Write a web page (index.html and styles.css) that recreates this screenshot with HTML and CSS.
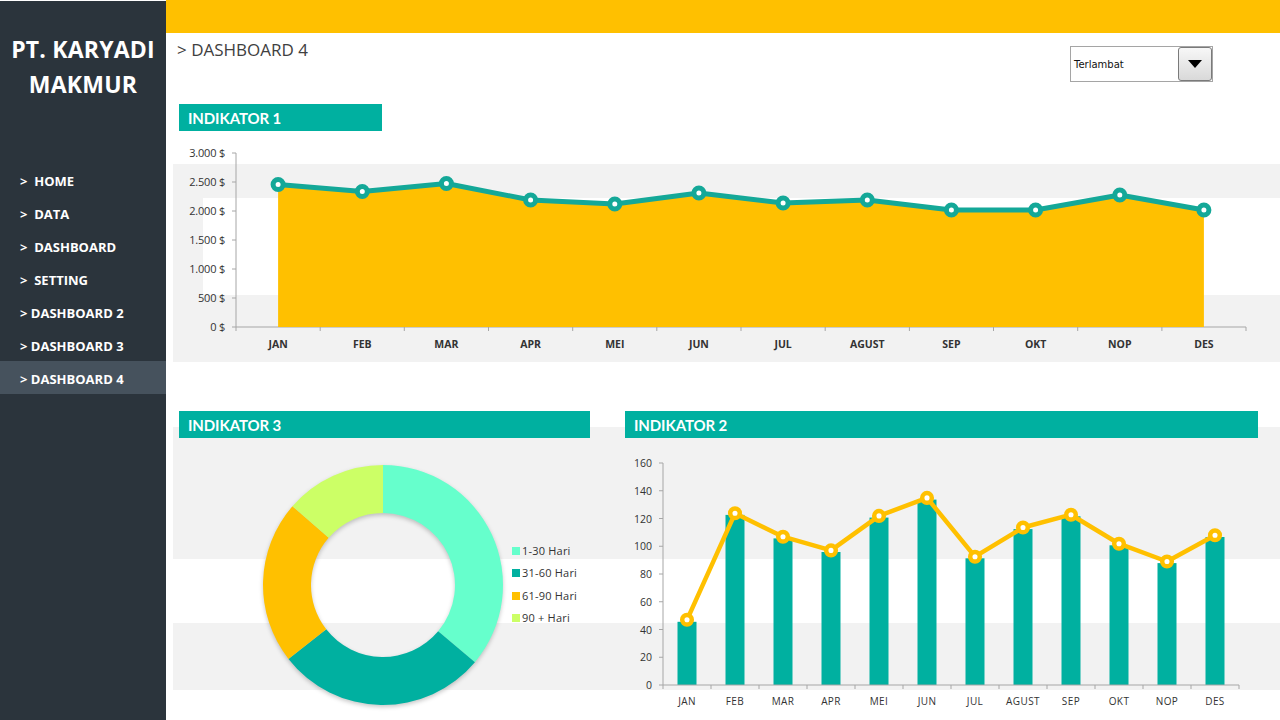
FILE: index.html
```html
<!DOCTYPE html>
<html lang="id">
<head>
<meta charset="utf-8">
<title>Dashboard 4</title>
<link rel="stylesheet" href="styles.css">
</head>
<body>
<div class="app">
  <aside class="sidebar">
    <div class="brand">PT. KARYADI<br>MAKMUR</div>
    <nav class="menu">
      <div class="item">&gt;&nbsp; HOME</div>
      <div class="item">&gt;&nbsp; DATA</div>
      <div class="item">&gt;&nbsp; DASHBOARD</div>
      <div class="item">&gt;&nbsp; SETTING</div>
      <div class="item">&gt; DASHBOARD 2</div>
      <div class="item">&gt; DASHBOARD 3</div>
      <div class="item active">&gt; DASHBOARD 4</div>
    </nav>
  </aside>
  <main class="main">
    <div class="topbar"></div>
    <div class="header">
      <div class="crumb">&gt; DASHBOARD 4</div>
      <div class="select">
        <span class="select-text">Terlambat</span>
        <span class="select-btn"><span class="tri"></span></span>
      </div>
    </div>
    <div class="title title1">INDIKATOR 1</div>
    <div class="chart1">
      <svg width="1107" height="222" viewBox="0 0 1107 222">
        <g class="axis">
          <line x1="63" y1="13" x2="63" y2="187"/>
          <line x1="59" y1="13" x2="63" y2="13"/>
          <line x1="59" y1="42" x2="63" y2="42"/>
          <line x1="59" y1="71" x2="63" y2="71"/>
          <line x1="59" y1="100" x2="63" y2="100"/>
          <line x1="59" y1="129" x2="63" y2="129"/>
          <line x1="59" y1="158" x2="63" y2="158"/>
          <line x1="59" y1="187" x2="63" y2="187"/>
          <line x1="63" y1="187" x2="1073" y2="187"/>
          <line x1="63" y1="187" x2="63" y2="191"/>
          <line x1="147.2" y1="187" x2="147.2" y2="191"/>
          <line x1="231.3" y1="187" x2="231.3" y2="191"/>
          <line x1="315.5" y1="187" x2="315.5" y2="191"/>
          <line x1="399.7" y1="187" x2="399.7" y2="191"/>
          <line x1="483.8" y1="187" x2="483.8" y2="191"/>
          <line x1="568" y1="187" x2="568" y2="191"/>
          <line x1="652.2" y1="187" x2="652.2" y2="191"/>
          <line x1="736.4" y1="187" x2="736.4" y2="191"/>
          <line x1="820.5" y1="187" x2="820.5" y2="191"/>
          <line x1="904.7" y1="187" x2="904.7" y2="191"/>
          <line x1="988.9" y1="187" x2="988.9" y2="191"/>
          <line x1="1073" y1="187" x2="1073" y2="191"/>
        </g>
        <g class="ylab">
          <text x="52" y="17">3.000 $</text>
          <text x="52" y="46">2.500 $</text>
          <text x="52" y="75">2.000 $</text>
          <text x="52" y="104">1.500 $</text>
          <text x="52" y="133">1.000 $</text>
          <text x="52" y="162">500 $</text>
          <text x="52" y="191">0 $</text>
        </g>
        <polygon class="area" points="105.1,187 105.1,44.5 189.3,51.5 273.4,43.5 357.6,60 441.8,64 525.9,53 610.1,63 694.3,60 778.4,70 862.6,70 946.8,55 1030.9,70 1030.9,187"/>
        <polyline class="line1" points="105.1,44.5 189.3,51.5 273.4,43.5 357.6,60 441.8,64 525.9,53 610.1,63 694.3,60 778.4,70 862.6,70 946.8,55 1030.9,70"/>
        <g class="dot1">
          <circle cx="105.1" cy="44.5" r="5"/>
          <circle cx="189.3" cy="51.5" r="5"/>
          <circle cx="273.4" cy="43.5" r="5"/>
          <circle cx="357.6" cy="60" r="5"/>
          <circle cx="441.8" cy="64" r="5"/>
          <circle cx="525.9" cy="53" r="5"/>
          <circle cx="610.1" cy="63" r="5"/>
          <circle cx="694.3" cy="60" r="5"/>
          <circle cx="778.4" cy="70" r="5"/>
          <circle cx="862.6" cy="70" r="5"/>
          <circle cx="946.8" cy="55" r="5"/>
          <circle cx="1030.9" cy="70" r="5"/>
        </g>
        <g class="xlab1">
          <text x="105.1" y="208">JAN</text>
          <text x="189.3" y="208">FEB</text>
          <text x="273.4" y="208">MAR</text>
          <text x="357.6" y="208">APR</text>
          <text x="441.8" y="208">MEI</text>
          <text x="525.9" y="208">JUN</text>
          <text x="610.1" y="208">JUL</text>
          <text x="694.3" y="208">AGUST</text>
          <text x="778.4" y="208">SEP</text>
          <text x="862.6" y="208">OKT</text>
          <text x="946.8" y="208">NOP</text>
          <text x="1030.9" y="208">DES</text>
        </g>
      </svg>
    </div>
    <div class="section2">
      <div class="col col-left">
        <div class="title">INDIKATOR 3</div>
        <svg width="411" height="282" viewBox="0 0 411 282">
          <g class="donut">
            <path fill="#66ffcc" d="M204 27 A120 120 0 0 1 295.92 224.13 L259.15 193.28 A72 72 0 0 0 204 75 Z"/>
            <path fill="#00b0a0" d="M295.92 224.13 A120 120 0 0 1 109.44 220.88 L147.26 191.33 A72 72 0 0 0 259.15 193.28 Z"/>
            <path fill="#ffc000" d="M109.44 220.88 A120 120 0 0 1 113.44 68.27 L149.66 99.76 A72 72 0 0 0 147.26 191.33 Z"/>
            <path fill="#ccff66" d="M113.44 68.27 A120 120 0 0 1 204 27 L204 75 A72 72 0 0 0 149.66 99.76 Z"/>
          </g>
          <g class="legend">
            <rect x="333" y="109" width="8" height="8" fill="#66ffcc"/>
            <text x="343" y="117">1-30 Hari</text>
            <rect x="333" y="131" width="8" height="8" fill="#00b0a0"/>
            <text x="343" y="139">31-60 Hari</text>
            <rect x="333" y="154" width="8" height="8" fill="#ffc000"/>
            <text x="343" y="162">61-90 Hari</text>
            <rect x="333" y="176" width="8" height="8" fill="#ccff66"/>
            <text x="343" y="184">90 + Hari</text>
          </g>
        </svg>
      </div>
      <div class="col col-right">
        <div class="title">INDIKATOR 2</div>
        <svg width="633" height="282" viewBox="0 0 633 282">
          <g class="axis">
            <line x1="38" y1="25" x2="38" y2="247"/>
            <line x1="34" y1="25" x2="38" y2="25"/>
            <line x1="34" y1="52.75" x2="38" y2="52.75"/>
            <line x1="34" y1="80.5" x2="38" y2="80.5"/>
            <line x1="34" y1="108.25" x2="38" y2="108.25"/>
            <line x1="34" y1="136" x2="38" y2="136"/>
            <line x1="34" y1="163.75" x2="38" y2="163.75"/>
            <line x1="34" y1="191.5" x2="38" y2="191.5"/>
            <line x1="34" y1="219.25" x2="38" y2="219.25"/>
            <line x1="34" y1="247" x2="38" y2="247"/>
          </g>
          <g class="ylab2">
            <text x="27" y="29">160</text>
            <text x="27" y="56.75">140</text>
            <text x="27" y="84.5">120</text>
            <text x="27" y="112.25">100</text>
            <text x="27" y="140">80</text>
            <text x="27" y="167.75">60</text>
            <text x="27" y="195.5">40</text>
            <text x="27" y="223.25">20</text>
            <text x="27" y="251">0</text>
          </g>
          <g class="bars">
            <rect x="52.5" y="183.8" width="19" height="63.2"/>
            <rect x="100.5" y="76.9" width="19" height="170.1"/>
            <rect x="148.5" y="100.4" width="19" height="146.6"/>
            <rect x="196.5" y="114" width="19" height="133"/>
            <rect x="244.5" y="79.6" width="19" height="167.4"/>
            <rect x="292.5" y="61.6" width="19" height="185.4"/>
            <rect x="340.5" y="120.3" width="19" height="126.7"/>
            <rect x="388.5" y="91.1" width="19" height="155.9"/>
            <rect x="436.5" y="78.3" width="19" height="168.7"/>
            <rect x="484.5" y="107.3" width="19" height="139.7"/>
            <rect x="532.5" y="125.1" width="19" height="121.9"/>
            <rect x="580.5" y="99" width="19" height="148"/>
          </g>
          <g class="axis">
            <line x1="38" y1="247" x2="614" y2="247"/>
            <line x1="38" y1="247" x2="38" y2="251"/>
            <line x1="86" y1="247" x2="86" y2="251"/>
            <line x1="134" y1="247" x2="134" y2="251"/>
            <line x1="182" y1="247" x2="182" y2="251"/>
            <line x1="230" y1="247" x2="230" y2="251"/>
            <line x1="278" y1="247" x2="278" y2="251"/>
            <line x1="326" y1="247" x2="326" y2="251"/>
            <line x1="374" y1="247" x2="374" y2="251"/>
            <line x1="422" y1="247" x2="422" y2="251"/>
            <line x1="470" y1="247" x2="470" y2="251"/>
            <line x1="518" y1="247" x2="518" y2="251"/>
            <line x1="566" y1="247" x2="566" y2="251"/>
            <line x1="614" y1="247" x2="614" y2="251"/>
          </g>
          <polyline class="line2" points="62,181.8 110,75.3 158,98.7 206,112.4 254,77.9 302,59.9 350,118.7 398,89.5 446,76.7 494,105.7 542,123.5 590,97.2"/>
          <g class="dot2">
            <circle cx="62" cy="181.8" r="4.8"/>
            <circle cx="110" cy="75.3" r="4.8"/>
            <circle cx="158" cy="98.7" r="4.8"/>
            <circle cx="206" cy="112.4" r="4.8"/>
            <circle cx="254" cy="77.9" r="4.8"/>
            <circle cx="302" cy="59.9" r="4.8"/>
            <circle cx="350" cy="118.7" r="4.8"/>
            <circle cx="398" cy="89.5" r="4.8"/>
            <circle cx="446" cy="76.7" r="4.8"/>
            <circle cx="494" cy="105.7" r="4.8"/>
            <circle cx="542" cy="123.5" r="4.8"/>
            <circle cx="590" cy="97.2" r="4.8"/>
          </g>
          <g class="xlab2">
            <text x="62" y="267">JAN</text>
            <text x="110" y="267">FEB</text>
            <text x="158" y="267">MAR</text>
            <text x="206" y="267">APR</text>
            <text x="254" y="267">MEI</text>
            <text x="302" y="267">JUN</text>
            <text x="350" y="267">JUL</text>
            <text x="398" y="267">AGUST</text>
            <text x="446" y="267">SEP</text>
            <text x="494" y="267">OKT</text>
            <text x="542" y="267">NOP</text>
            <text x="590" y="267">DES</text>
          </g>
        </svg>
      </div>
    </div>
  </main>
</div>
</body>
</html>
```

FILE: styles.css
```css
* { box-sizing: border-box; }

html, body {
  margin: 0;
  padding: 0;
  background: #ffffff;
}

body {
  font-family: "Open Sans", "Noto Sans", sans-serif;
  color: #333333;
}

.app {
  display: flex;
  width: 1280px;
  height: 720px;
  overflow: hidden;
}

/* ---------- sidebar ---------- */
.sidebar {
  width: 166px;
  flex: 0 0 166px;
  background: #2b343c;
  color: #ffffff;
  margin-top: 1px;
}

.brand {
  font-weight: 700;
  font-size: 23px;
  line-height: 35px;
  text-align: center;
  padding-top: 31px;
  letter-spacing: 0.2px;
}

.menu {
  margin-top: 61px;
}

.item {
  height: 33px;
  line-height: 29px;
  padding-top: 4px;
  padding-left: 20px;
  font-size: 13px;
  font-weight: 700;
  white-space: nowrap;
}

.item.active {
  background: #46525d;
}

/* ---------- main ---------- */
.main {
  flex: 1;
  display: flex;
  flex-direction: column;
}

.topbar {
  height: 33px;
  background: #ffc000;
}

.header {
  height: 71px;
  display: flex;
  justify-content: space-between;
  align-items: flex-start;
  padding: 0 67px 0 11px;
}

.crumb {
  font-size: 17px;
  line-height: 22px;
  margin-top: 6px;
  color: #404040;
}

.select {
  margin-top: 13px;
  width: 143px;
  height: 36px;
  border: 1px solid #a5a5a5;
  display: flex;
  align-items: center;
  justify-content: space-between;
  background: #ffffff;
}

.select-text {
  font-family: "DejaVu Sans", sans-serif;
  font-size: 10px;
  padding-left: 3px;
  color: #111111;
}

.select-btn {
  width: 34px;
  height: 34px;
  border: 1px solid #7a7a7a;
  border-radius: 3px;
  background: linear-gradient(#f7f7f7, #d9d9d9);
  display: flex;
  align-items: center;
  justify-content: center;
}

.tri {
  width: 0;
  height: 0;
  border-left: 7px solid transparent;
  border-right: 7px solid transparent;
  border-top: 8px solid #000000;
}

.title {
  height: 27px;
  line-height: 28px;
  background: #00b0a0;
  color: #ffffff;
  font-family: "Lato", "Open Sans", sans-serif;
  font-weight: 700;
  font-size: 15px;
  padding-left: 9px;
  letter-spacing: -0.1px;
}

.title1 {
  margin-left: 13px;
  width: 203px;
}

.chart1 {
  margin-top: 9px;
  margin-left: 7px;
  width: 1107px;
  height: 222px;
  background:
    linear-gradient(#f2f2f2, #f2f2f2) 0 58px / 30px 97px no-repeat,
    linear-gradient(to bottom, transparent 24px, #f2f2f2 24px, #f2f2f2 58px, #ffffff 58px, #ffffff 155px, #f2f2f2 155px);
}

.chart1 svg, .col svg {
  display: block;
}

.section2 {
  margin-top: 49px;
  margin-left: 7px;
  width: 1107px;
  height: 309px;
  display: flex;
  gap: 35px;
  padding-left: 6px;
  background: linear-gradient(to bottom, transparent 16px, #f2f2f2 16px, #f2f2f2 148px, #ffffff 148px, #ffffff 212px, #f2f2f2 212px, #f2f2f2 279px, #ffffff 279px);
}

.col-left { width: 411px; }
.col-right { width: 633px; }

/* ---------- charts ---------- */
.axis line {
  stroke: #a6a6a6;
  stroke-width: 1;
}

.ylab text, .ylab2 text {
  font-size: 11px;
  fill: #333333;
  text-anchor: end;
}

.ylab text { letter-spacing: -0.2px; }

.ylab2 text { font-size: 10.5px; }

.xlab1 text {
  font-size: 10.5px;
  font-weight: 700;
  fill: #333333;
  text-anchor: middle;
}

.xlab2 text {
  font-size: 10px;
  fill: #333333;
  text-anchor: middle;
  letter-spacing: 0.4px;
}

.area { fill: #ffc000; }

.line1 {
  fill: none;
  stroke: #14a898;
  stroke-width: 5;
  stroke-linejoin: round;
}

.dot1 circle {
  fill: #ffffff;
  stroke: #14a898;
  stroke-width: 5;
}

.bars rect { fill: #00b0a0; }

.line2 {
  fill: none;
  stroke: #ffc000;
  stroke-width: 4.5;
  stroke-linejoin: round;
}

.dot2 circle {
  fill: #ffffff;
  stroke: #ffc000;
  stroke-width: 4.5;
}

.donut {
  filter: drop-shadow(0 2px 2px rgba(0, 0, 0, 0.22));
}

.legend text {
  font-size: 11px;
  fill: #333333;
  letter-spacing: 0.2px;
}
```
